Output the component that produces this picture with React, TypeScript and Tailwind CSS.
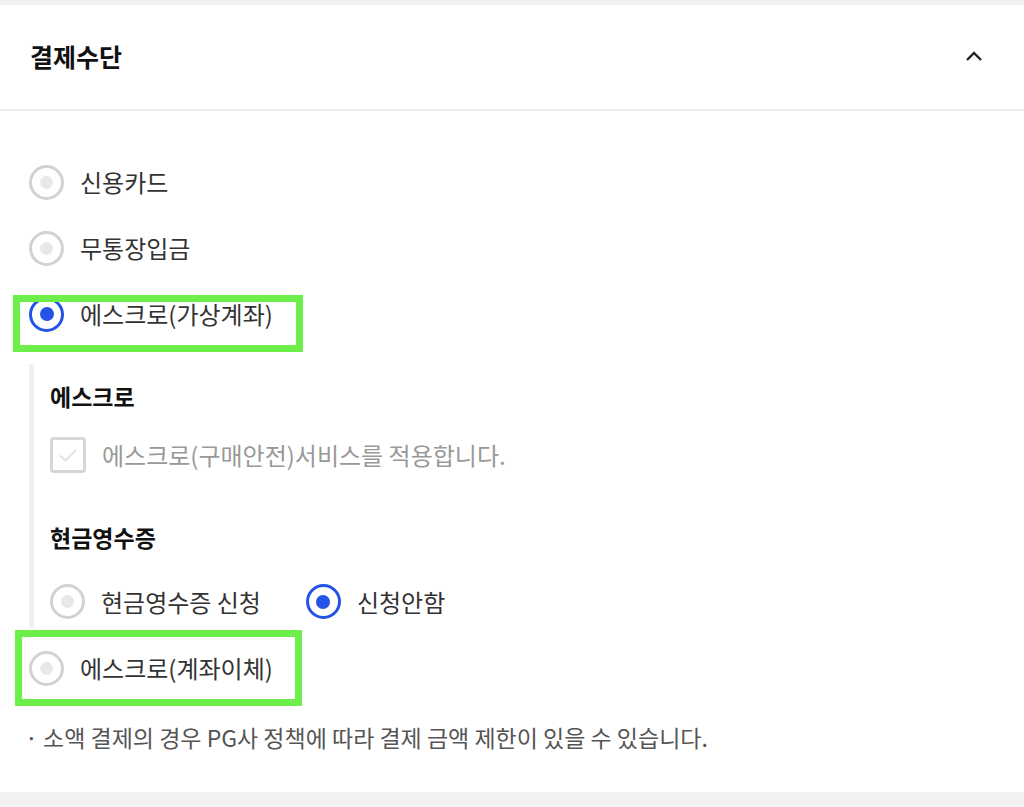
import type { ReactNode } from 'react';

const FONT = { fontFamily: '"Noto Sans CJK KR", "Noto Sans", sans-serif' };

function Radio({ checked }: { checked?: boolean }) {
  if (checked) {
    return (
      <span className="flex h-[35px] w-[35px] shrink-0 items-center justify-center rounded-full border-[3px] border-[#2453e6] bg-white">
        <span className="h-[14px] w-[14px] rounded-full bg-[#2453e6]" />
      </span>
    );
  }
  return (
    <span className="flex h-[35px] w-[35px] shrink-0 items-center justify-center rounded-full border-[3px] border-[#d2d2d2] bg-white">
      <span className="h-[13px] w-[13px] rounded-full bg-[#e8e8e8]" />
    </span>
  );
}

function Highlight({ children, className }: { children: ReactNode; className: string }) {
  return (
    <div className="relative">
      {children}
      <span className={`pointer-events-none absolute border-[7px] border-[#6cef4b] ${className}`} />
    </div>
  );
}

function OptionRow({ label, checked }: { label: string; checked?: boolean }) {
  return (
    <div className="flex h-[66px] items-center gap-[16px] pl-[29px]">
      <Radio checked={checked} />
      <span className="text-[24px] leading-[32px] text-[#333]">{label}</span>
    </div>
  );
}

export default function App() {
  return (
    <div className="h-[807px] w-full bg-[#f2f2f2] pt-[5px]" style={FONT}>
      <div className="h-[787px] bg-white">
        <div className="flex h-[106px] items-center justify-between border-b-2 border-[#ececec] pl-[30px] pr-[40px]">
          <h2 className="text-[25px] font-bold text-[#111]">결제수단</h2>
          <svg width="20" height="12" viewBox="0 0 20 12" fill="none" className="mt-[-2px]">
            <path d="M3 10 L10 3 L17 10" stroke="#222" strokeWidth="2.4" />
          </svg>
        </div>

        <div className="pt-[38px]">
          <OptionRow label="신용카드" />
          <OptionRow label="무통장입금" />
          <Highlight className="left-[13px] top-[14px] h-[57px] w-[290px]">
            <OptionRow label="에스크로(가상계좌)" checked />
          </Highlight>

          <div className="ml-[29px] mt-[17px] border-l-[5px] border-[#f0f0f0] pb-[9px] pl-[16px] pt-[18px]">
            <h3 className="text-[23px] font-bold leading-[28px] text-[#111]">에스크로</h3>
            <div className="mt-[27px] flex items-center gap-[16px]">
              <span className="flex h-[36px] w-[36px] items-center justify-center rounded-[4px] border-[3px] border-[#d6d6d6] bg-white">
                <svg width="22" height="16" viewBox="0 0 22 16" fill="none">
                  <path d="M3 8.5 L8.5 13.5 L19 3" stroke="#e3e3e3" strokeWidth="2" />
                </svg>
              </span>
              <span className="text-[24px] leading-[32px] text-[#999]">에스크로(구매안전)서비스를 적용합니다.</span>
            </div>
            <h3 className="mt-[50px] text-[23px] font-bold leading-[28px] text-[#111]">현금영수증</h3>
            <div className="mt-[33px] flex items-center">
              <div className="flex items-center gap-[16px]">
                <Radio />
                <span className="text-[24px] leading-[32px] text-[#333]">현금영수증 신청</span>
              </div>
              <div className="ml-[45px] flex items-center gap-[16px]">
                <Radio checked />
                <span className="text-[24px] leading-[32px] text-[#333]">신청안함</span>
              </div>
            </div>
          </div>

          <Highlight className="left-[15px] top-[2px] h-[76px] w-[287px]">
            <div className="pt-[7px]">
              <OptionRow label="에스크로(계좌이체)" />
            </div>
          </Highlight>

          <p className="mt-[22px] pl-[25px] text-[23px] leading-[28px] text-[#555]">
            · 소액 결제의 경우 PG사 정책에 따라 결제 금액 제한이 있을 수 있습니다.
          </p>
        </div>
      </div>
    </div>
  );
}
